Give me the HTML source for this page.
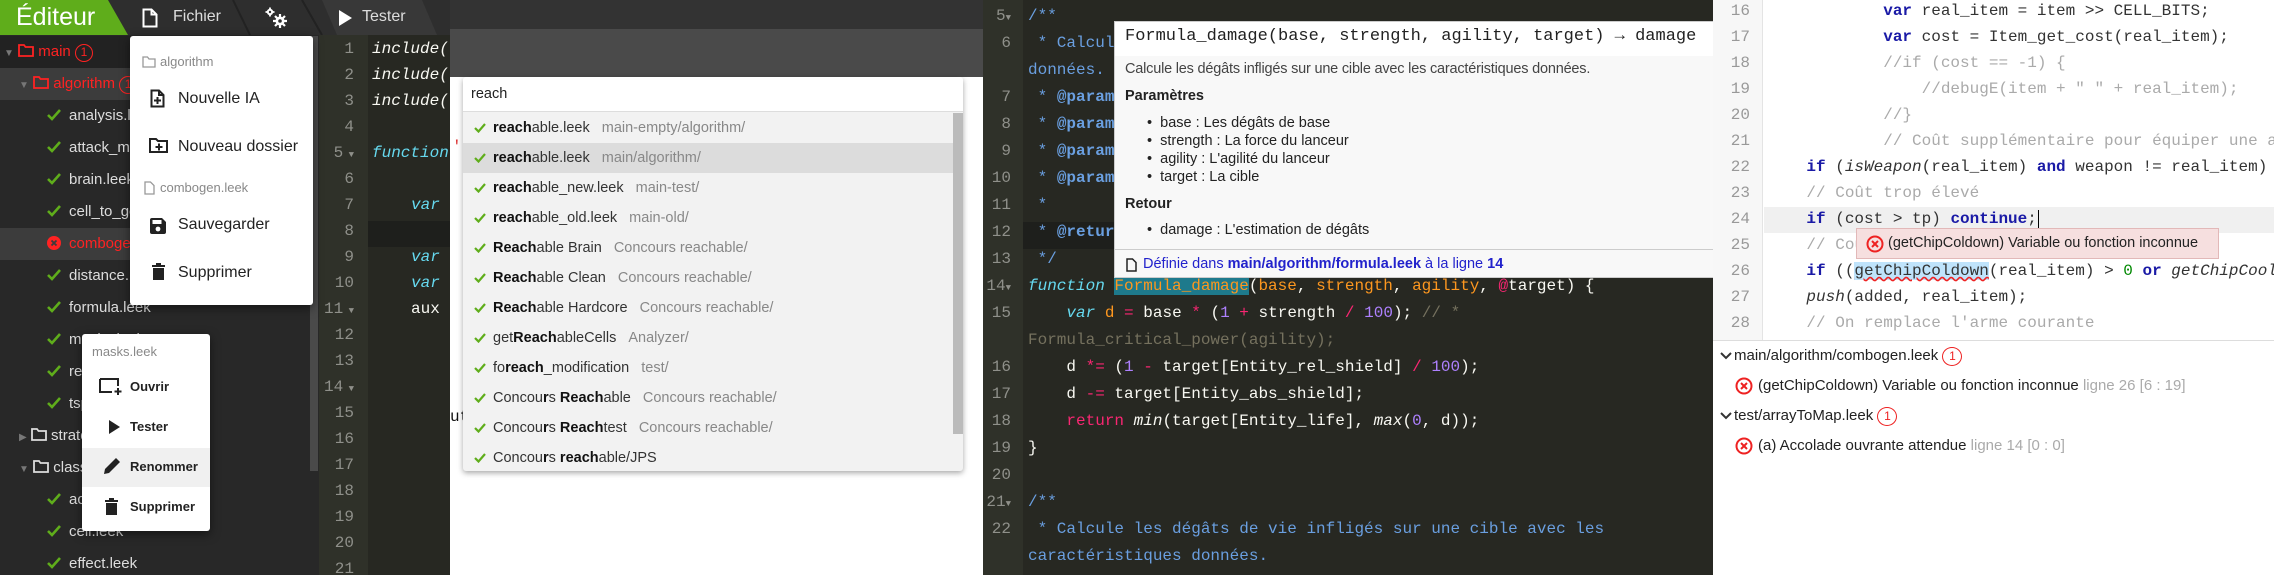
<!DOCTYPE html>
<html><head><meta charset="utf-8">
<style>
*{margin:0;padding:0;box-sizing:border-box}
body{width:2274px;height:575px;overflow:hidden;position:relative;background:#fff;font-family:"Liberation Sans",sans-serif}
.a{position:absolute;white-space:nowrap}
.mono{font-family:"Liberation Mono",monospace}
.mono div{white-space:pre}
.p1{left:0;top:0;width:450px;height:575px;background:#282828;overflow:hidden}
.tr{position:absolute;left:0;width:310px;height:32px;line-height:32px;font-size:15px;color:#ddd}
.chk{display:inline-block;width:14px;height:14px;vertical-align:-2px;margin-right:8px}
.ln1{position:absolute;width:36px;text-align:right;color:#8f908a;font-size:16px}
.c1{position:absolute;left:372px;font-size:16px}
.menu{position:absolute;background:#fff;border-radius:3px;box-shadow:0 3px 10px rgba(0,0,0,.5)}
.mi{position:absolute;left:0;right:0;font-size:16px;color:#222}
.ac{position:absolute;left:0;right:10px;height:30px;line-height:30px;font-size:14.5px;color:#333;padding-left:30px}
.ac b{color:#111}
.ac i{font-style:normal;color:#888;margin-left:12px}
.ac svg{position:absolute;left:11px;top:10px}
.ln3{position:absolute;left:983px;width:28px;text-align:right;color:#8f908a;font-size:16px}
.c3{position:absolute;left:1028px;font-size:16px;color:#f8f8f2}
.ln4{position:absolute;left:1714px;width:36px;text-align:right;color:#999;font-size:16px}
.c4{position:absolute;left:1768px;font-size:16px;color:#333}
.cm{color:#6a9fe0}
.kw{color:#66d9ef;font-style:italic}.or{color:#fd971f}.pk{color:#f92672}.nu{color:#ae81ff}.gr{color:#75715e}
.k4{color:#1a1aa6;font-weight:bold}.g4{color:#aaa}
</style></head><body>

<!-- PANEL 1 -->
<div class="a p1">
  <div class="a" style="left:0;top:0;width:450px;height:35px;background:#2e2e2e"></div>
  <div class="a" style="left:322px;top:0;width:128px;height:35px;background:#383838;clip-path:polygon(0 0,100px 0,115px 35px,15px 35px)"></div>
  <div class="a" style="left:0;top:0;width:130px;height:35px;background:#5fad1b;clip-path:polygon(0 0,108px 0,128px 35px,0 35px)"></div>
  <svg class="a" style="left:230px;top:0" width="100" height="35"><path d="M3 0 L20 35 M72 0 L92 35" stroke="#222" stroke-width="2"/></svg>
  <div class="a" style="left:16px;top:3px;font-size:25px;color:#fff">Éditeur</div>
  <svg class="a" style="left:142px;top:8px" width="16" height="20" viewBox="0 0 16 20"><path d="M1.5 1.5h8l5 5v12h-13z M9.5 1.5v5h5" fill="none" stroke="#fff" stroke-width="2"/></svg>
  <div class="a" style="left:173px;top:8px;font-size:16px;color:#ddd">Fichier</div>
  <svg class="a" style="left:264px;top:7px" width="24" height="22" viewBox="0 0 24 22"><circle cx="16" cy="14" r="4.5" fill="#fff"/><path d="M16 7v14M9 14h14M11 9l10 10M21 9l-10 10" stroke="#fff" stroke-width="2.2"/><circle cx="16" cy="14" r="1.8" fill="#2e2e2e"/><circle cx="6" cy="5" r="3.2" fill="#fff"/><path d="M6 0.5v9M1.5 5h9" stroke="#fff" stroke-width="1.8"/><circle cx="6" cy="5" r="1.2" fill="#2e2e2e"/></svg>
  <svg class="a" style="left:339px;top:10px" width="14" height="16"><path d="M0 0L13 8L0 16z" fill="#fff"/></svg>
  <div class="a" style="left:362px;top:8px;font-size:16px;color:#ddd">Tester</div>

  <div class="a" style="left:0;top:35px;width:318px;height:540px;background:#282828"></div>
  <div class="a" style="left:0;top:36px;width:310px;height:32px;background:#222"></div>
  <div class="a" style="left:0;top:68px;width:310px;height:32px;background:#3c3c3c"></div>
  <div class="a" style="left:0;top:228px;width:310px;height:32px;background:#3c3c3c"></div>
  <div class="a" style="left:310px;top:36px;width:8px;height:435px;background:#4a4a4a"></div>
  <div class="tr" style="top:36px;color:#f22;padding-left:4px"><span style="font-size:10px;color:#777">▼</span> <svg width="16" height="13" style="vertical-align:-1px"><path d="M1 1h5l1.5 2H15v9H1z" fill="none" stroke="#f22" stroke-width="1.8"/></svg> main <span style="display:inline-block;width:18px;height:18px;border:1.5px solid #f22;border-radius:50%;line-height:15px;text-align:center;font-size:12px">1</span></div>
  <div class="tr" style="top:68px;color:#f22;padding-left:19px"><span style="font-size:10px;color:#777">▼</span> <svg width="16" height="13" style="vertical-align:-1px"><path d="M1 1h5l1.5 2H15v9H1z" fill="none" stroke="#f22" stroke-width="1.8"/></svg> algorithm <span style="display:inline-block;width:18px;height:18px;border:1.5px solid #f22;border-radius:50%;line-height:15px;text-align:center;font-size:12px">1</span></div>
  <div class="tr" style="top:100px;padding-left:47px"><svg class="chk" viewBox="0 0 14 14"><path d="M1 7l4 4 8-9" fill="none" stroke="#5fad1b" stroke-width="2.6"/></svg>analysis.leek</div>
  <div class="tr" style="top:132px;padding-left:47px"><svg class="chk" viewBox="0 0 14 14"><path d="M1 7l4 4 8-9" fill="none" stroke="#5fad1b" stroke-width="2.6"/></svg>attack_manager.leek</div>
  <div class="tr" style="top:164px;padding-left:47px"><svg class="chk" viewBox="0 0 14 14"><path d="M1 7l4 4 8-9" fill="none" stroke="#5fad1b" stroke-width="2.6"/></svg>brain.leek</div>
  <div class="tr" style="top:196px;padding-left:47px"><svg class="chk" viewBox="0 0 14 14"><path d="M1 7l4 4 8-9" fill="none" stroke="#5fad1b" stroke-width="2.6"/></svg>cell_to_go.leek</div>
  <div class="tr" style="top:228px;padding-left:47px;color:#f22"><svg class="chk" viewBox="0 0 14 14"><circle cx="7" cy="7" r="7" fill="#f22"/><path d="M4.5 4.5l5 5M9.5 4.5l-5 5" stroke="#3c3c3c" stroke-width="1.8"/></svg>combogen.leek</div>
  <div class="tr" style="top:260px;padding-left:47px"><svg class="chk" viewBox="0 0 14 14"><path d="M1 7l4 4 8-9" fill="none" stroke="#5fad1b" stroke-width="2.6"/></svg>distance.leek</div>
  <div class="tr" style="top:292px;padding-left:47px"><svg class="chk" viewBox="0 0 14 14"><path d="M1 7l4 4 8-9" fill="none" stroke="#5fad1b" stroke-width="2.6"/></svg>formula.leek</div>
  <div class="tr" style="top:324px;padding-left:47px"><svg class="chk" viewBox="0 0 14 14"><path d="M1 7l4 4 8-9" fill="none" stroke="#5fad1b" stroke-width="2.6"/></svg>masks.leek</div>
  <div class="tr" style="top:356px;padding-left:47px"><svg class="chk" viewBox="0 0 14 14"><path d="M1 7l4 4 8-9" fill="none" stroke="#5fad1b" stroke-width="2.6"/></svg>reachable.leek</div>
  <div class="tr" style="top:388px;padding-left:47px"><svg class="chk" viewBox="0 0 14 14"><path d="M1 7l4 4 8-9" fill="none" stroke="#5fad1b" stroke-width="2.6"/></svg>tsp.leek</div>
  <div class="tr" style="top:420px;padding-left:19px"><span style="font-size:10px;color:#777">▶</span> <svg width="16" height="13" style="vertical-align:-1px"><path d="M1 1h5l1.5 2H15v9H1z" fill="none" stroke="#ddd" stroke-width="1.8"/></svg> strategy</div>
  <div class="tr" style="top:452px;padding-left:19px"><span style="font-size:10px;color:#777">▼</span> <svg width="16" height="13" style="vertical-align:-1px"><path d="M1 1h5l1.5 2H15v9H1z" fill="none" stroke="#ddd" stroke-width="1.8"/></svg> classes</div>
  <div class="tr" style="top:484px;padding-left:47px"><svg class="chk" viewBox="0 0 14 14"><path d="M1 7l4 4 8-9" fill="none" stroke="#5fad1b" stroke-width="2.6"/></svg>action.leek</div>
  <div class="tr" style="top:516px;padding-left:47px"><svg class="chk" viewBox="0 0 14 14"><path d="M1 7l4 4 8-9" fill="none" stroke="#5fad1b" stroke-width="2.6"/></svg>cell.leek</div>
  <div class="tr" style="top:548px;padding-left:47px"><svg class="chk" viewBox="0 0 14 14"><path d="M1 7l4 4 8-9" fill="none" stroke="#5fad1b" stroke-width="2.6"/></svg>effect.leek</div>

  <div class="a" style="left:319px;top:35px;width:49px;height:540px;background:#2f3129"></div>
  <div class="a" style="left:368px;top:35px;width:82px;height:540px;background:#272822"></div>
  <div class="a" style="left:368px;top:221px;width:82px;height:26px;background:#1e1f1c"></div>
</div>
<div class="a mono" style="left:0;top:0;width:450px;height:575px;overflow:hidden">
  <div class="ln1" style="left:318px;top:40px">1</div>
  <div class="ln1" style="left:318px;top:66px">2</div>
  <div class="ln1" style="left:318px;top:92px">3</div>
  <div class="ln1" style="left:318px;top:118px">4</div>
  <div class="ln1" style="left:318px;top:144px">5<span style="font-size:9px"> ▼</span></div>
  <div class="ln1" style="left:318px;top:170px">6</div>
  <div class="ln1" style="left:318px;top:196px">7</div>
  <div class="ln1" style="left:318px;top:222px">8</div>
  <div class="ln1" style="left:318px;top:248px">9</div>
  <div class="ln1" style="left:318px;top:274px">10</div>
  <div class="ln1" style="left:318px;top:300px">11<span style="font-size:9px"> ▼</span></div>
  <div class="ln1" style="left:318px;top:326px">12</div>
  <div class="ln1" style="left:318px;top:352px">13</div>
  <div class="ln1" style="left:318px;top:378px">14<span style="font-size:9px"> ▼</span></div>
  <div class="ln1" style="left:318px;top:404px">15</div>
  <div class="ln1" style="left:318px;top:430px">16</div>
  <div class="ln1" style="left:318px;top:456px">17</div>
  <div class="ln1" style="left:318px;top:482px">18</div>
  <div class="ln1" style="left:318px;top:508px">19</div>
  <div class="ln1" style="left:318px;top:534px">20</div>
  <div class="ln1" style="left:318px;top:560px">21</div>
  <div class="c1" style="top:40px;color:#f8f8f2;font-style:italic">include(</div>
  <div class="c1" style="top:66px;color:#f8f8f2;font-style:italic">include(</div>
  <div class="c1" style="top:92px;color:#f8f8f2;font-style:italic">include(</div>
  <div class="c1 kw" style="top:144px">function</div>
  <div class="c1 kw" style="top:196px;left:411px">var</div>
  <div class="c1 kw" style="top:248px;left:411px">var</div>
  <div class="c1 kw" style="top:274px;left:411px">var</div>
  <div class="c1" style="top:300px;left:411px;color:#f8f8f2">aux</div>
</div>

<div class="menu" style="left:130px;top:36px;width:183px;height:269px">
  <svg class="a" style="left:12px;top:20px" width="14" height="12"><path d="M1 1h4.5l1.5 2H13v8H1z" fill="none" stroke="#999" stroke-width="1.3"/></svg>
  <div class="mi" style="left:30px;top:18px;font-size:13px;color:#888">algorithm</div>
  <svg class="a" style="left:20px;top:53px" width="15" height="19"><path d="M1.5 1.5h7.5l4.5 4.5v11.5h-12z M9 1.5v4.5h4.5" fill="none" stroke="#222" stroke-width="2"/><path d="M7.5 8v7M4 11.5h7" stroke="#222" stroke-width="2"/></svg>
  <div class="mi" style="left:48px;top:54px">Nouvelle IA</div>
  <svg class="a" style="left:19px;top:102px" width="19" height="15"><path d="M1 1h6l2 2h9v11H1z" fill="none" stroke="#222" stroke-width="2"/><path d="M10 5.5v7M6.5 9h7" stroke="#222" stroke-width="2"/></svg>
  <div class="mi" style="left:48px;top:102px">Nouveau dossier</div>
  <svg class="a" style="left:14px;top:145px" width="11" height="14"><path d="M1 1h5.5l3.5 3.5v8.5H1z" fill="none" stroke="#999" stroke-width="1.3"/></svg>
  <div class="mi" style="left:30px;top:144px;font-size:13px;color:#888">combogen.leek</div>
  <svg class="a" style="left:20px;top:182px" width="16" height="16"><path d="M0 2a2 2 0 0 1 2-2h10l4 4v10a2 2 0 0 1-2 2H2a2 2 0 0 1-2-2z" fill="#222"/><rect x="2.5" y="2" width="9" height="4" fill="#fff"/><circle cx="8" cy="11" r="2.4" fill="#fff"/></svg>
  <div class="mi" style="left:48px;top:180px">Sauvegarder</div>
  <svg class="a" style="left:22px;top:227px" width="13" height="17"><path d="M0 2h13v2H0z M4 0h5v2H4z M1 5h11v12H1z" fill="#222"/></svg>
  <div class="mi" style="left:48px;top:228px">Supprimer</div>
</div>

<div class="menu" style="left:82px;top:334px;width:128px;height:197px">
  <div class="mi" style="left:10px;top:10px;font-size:13px;color:#888">masks.leek</div>
  <svg class="a" style="left:17px;top:44px" width="24" height="18"><path d="M1 1h18v7 M1 1v13h12" fill="none" stroke="#222" stroke-width="2"/><path d="M19 10v7M15.5 13.5h7" stroke="#222" stroke-width="2"/></svg>
  <div class="mi" style="left:48px;top:45px;font-size:13px;font-weight:bold">Ouvrir</div>
  <svg class="a" style="left:27px;top:86px" width="11" height="14"><path d="M0 0L11 7L0 14z" fill="#222"/></svg>
  <div class="mi" style="left:48px;top:85px;font-size:13px;font-weight:bold">Tester</div>
  <div class="a" style="left:0;top:114px;width:128px;height:39px;background:#f0f0f0"></div>
  <svg class="a" style="left:20px;top:122px" width="20" height="20"><path d="M2 18l1-5L14 2l4 4L7 17z" fill="#222"/></svg>
  <div class="mi" style="left:48px;top:125px;font-size:13px;font-weight:bold">Renommer</div>
  <svg class="a" style="left:23px;top:164px" width="13" height="17"><path d="M0 2h13v2H0z M4 0h5v2H4z M1 5h11v12H1z" fill="#222"/></svg>
  <div class="mi" style="left:48px;top:165px;font-size:13px;font-weight:bold">Supprimer</div>
</div>

<!-- PANEL 2 -->
<div class="a" style="left:450px;top:0;width:533px;height:29px;background:#333"></div>
<div class="a" style="left:450px;top:29px;width:533px;height:48px;background:#4a4a4a"></div>
<div class="a mono" style="left:452px;top:138px;font-size:16px;color:#111"><span style="color:#d33">'</span>)</div>
<div class="a mono" style="left:450px;top:408px;font-size:16px;color:#111">ut</div>
<div class="a" style="left:463px;top:77px;width:500px;height:394px;background:#f2f2f2;box-shadow:0 2px 6px rgba(0,0,0,.35);border-radius:3px;overflow:hidden">
  <div class="a" style="left:0;top:0;width:500px;height:35px;background:#fff;border-bottom:1px solid #ddd"></div>
  <div class="a" style="left:8px;top:9px;font-size:14.5px;color:#222">reach</div>
  <div class="a" style="left:490px;top:36px;width:10px;height:321px;background:#bbb"></div>
  <div class="a" style="left:0;top:66px;width:490px;height:30px;background:#dcdcdc"></div>
  <div style="position:absolute;left:0;top:36px;width:500px">
    <div class="ac" style="top:0"><svg width="12" height="10"><path d="M1 5l3.5 3.5L11 1" fill="none" stroke="#5fad1b" stroke-width="2.2"/></svg><b>reach</b>able.leek<i>main-empty/algorithm/</i></div>
    <div class="ac" style="top:30px"><svg width="12" height="10"><path d="M1 5l3.5 3.5L11 1" fill="none" stroke="#5fad1b" stroke-width="2.2"/></svg><b>reach</b>able.leek<i>main/algorithm/</i></div>
    <div class="ac" style="top:60px"><svg width="12" height="10"><path d="M1 5l3.5 3.5L11 1" fill="none" stroke="#5fad1b" stroke-width="2.2"/></svg><b>reach</b>able_new.leek<i>main-test/</i></div>
    <div class="ac" style="top:90px"><svg width="12" height="10"><path d="M1 5l3.5 3.5L11 1" fill="none" stroke="#5fad1b" stroke-width="2.2"/></svg><b>reach</b>able_old.leek<i>main-old/</i></div>
    <div class="ac" style="top:120px"><svg width="12" height="10"><path d="M1 5l3.5 3.5L11 1" fill="none" stroke="#5fad1b" stroke-width="2.2"/></svg><b>Reach</b>able Brain<i>Concours reachable/</i></div>
    <div class="ac" style="top:150px"><svg width="12" height="10"><path d="M1 5l3.5 3.5L11 1" fill="none" stroke="#5fad1b" stroke-width="2.2"/></svg><b>Reach</b>able Clean<i>Concours reachable/</i></div>
    <div class="ac" style="top:180px"><svg width="12" height="10"><path d="M1 5l3.5 3.5L11 1" fill="none" stroke="#5fad1b" stroke-width="2.2"/></svg><b>Reach</b>able Hardcore<i>Concours reachable/</i></div>
    <div class="ac" style="top:210px"><svg width="12" height="10"><path d="M1 5l3.5 3.5L11 1" fill="none" stroke="#5fad1b" stroke-width="2.2"/></svg>get<b>Reach</b>ableCells<i>Analyzer/</i></div>
    <div class="ac" style="top:240px"><svg width="12" height="10"><path d="M1 5l3.5 3.5L11 1" fill="none" stroke="#5fad1b" stroke-width="2.2"/></svg>fo<b>reach</b>_modification<i>test/</i></div>
    <div class="ac" style="top:270px"><svg width="12" height="10"><path d="M1 5l3.5 3.5L11 1" fill="none" stroke="#5fad1b" stroke-width="2.2"/></svg>Concou<b>r</b>s <b>Reach</b>able<i>Concours reachable/</i></div>
    <div class="ac" style="top:300px"><svg width="12" height="10"><path d="M1 5l3.5 3.5L11 1" fill="none" stroke="#5fad1b" stroke-width="2.2"/></svg>Concou<b>r</b>s <b>Reach</b>test<i>Concours reachable/</i></div>
    <div class="ac" style="top:330px"><svg width="12" height="10"><path d="M1 5l3.5 3.5L11 1" fill="none" stroke="#5fad1b" stroke-width="2.2"/></svg>Concou<b>r</b>s <b>reach</b>able/JPS</div>
  </div>
</div>

<!-- PANEL 3 -->
<div class="a" style="left:983px;top:0;width:730px;height:575px;background:#272822"></div>
<div class="a" style="left:983px;top:0;width:40px;height:575px;background:#2f3129"></div>
<div class="a" style="left:1023px;top:222px;width:690px;height:27px;background:#1e1f1c"></div>
<div class="a mono" style="left:0;top:0;width:1713px;height:575px;overflow:hidden">
  <div class="ln3" style="top:7px">5<span style="font-size:9px">▼</span></div>
  <div class="ln3" style="top:34px">6</div>
  <div class="ln3" style="top:88px">7</div>
  <div class="ln3" style="top:115px">8</div>
  <div class="ln3" style="top:142px">9</div>
  <div class="ln3" style="top:169px">10</div>
  <div class="ln3" style="top:196px">11</div>
  <div class="ln3" style="top:223px">12</div>
  <div class="ln3" style="top:250px">13</div>
  <div class="ln3" style="top:277px">14<span style="font-size:9px">▼</span></div>
  <div class="ln3" style="top:304px">15</div>
  <div class="ln3" style="top:358px">16</div>
  <div class="ln3" style="top:385px">17</div>
  <div class="ln3" style="top:412px">18</div>
  <div class="ln3" style="top:439px">19</div>
  <div class="ln3" style="top:466px">20</div>
  <div class="ln3" style="top:493px">21<span style="font-size:9px">▼</span></div>
  <div class="ln3" style="top:520px">22</div>
  <div class="c3 cm" style="top:7px">/**</div>
  <div class="c3 cm" style="top:34px"> * Calcule les dégâts infligés sur une cible avec les caractéristiques</div>
  <div class="c3 cm" style="top:61px">données.</div>
  <div class="c3 cm" style="top:88px"> * <b>@param</b></div>
  <div class="c3 cm" style="top:115px"> * <b>@param</b></div>
  <div class="c3 cm" style="top:142px"> * <b>@param</b></div>
  <div class="c3 cm" style="top:169px"> * <b>@param</b></div>
  <div class="c3 cm" style="top:196px"> *</div>
  <div class="c3 cm" style="top:223px"> * <b>@return</b></div>
  <div class="c3 cm" style="top:250px"> */</div>
  <div class="c3" style="top:277px"><span class="kw">function</span> <span class="or" style="background:#1e7a8c">Formula_damage</span>(<span class="or">base</span>, <span class="or">strength</span>, <span class="or">agility</span>, <span class="pk">@</span>target) {</div>
  <div class="c3" style="top:304px">    <span class="kw">var</span> <span class="or">d</span> <span class="pk">=</span> base <span class="pk">*</span> (<span class="nu">1</span> <span class="pk">+</span> strength <span class="pk">/</span> <span class="nu">100</span>); <span class="gr">// *</span></div>
  <div class="c3 gr" style="top:331px">Formula_critical_power(agility);</div>
  <div class="c3" style="top:358px">    d <span class="pk">*=</span> (<span class="nu">1</span> <span class="pk">-</span> target[Entity_rel_shield] <span class="pk">/</span> <span class="nu">100</span>);</div>
  <div class="c3" style="top:385px">    d <span class="pk">-=</span> target[Entity_abs_shield];</div>
  <div class="c3" style="top:412px">    <span class="pk">return</span> <i>min</i>(target[Entity_life], <i>max</i>(<span class="nu">0</span>, d));</div>
  <div class="c3" style="top:439px">}</div>
  <div class="c3 cm" style="top:493px">/**</div>
  <div class="c3 cm" style="top:520px"> * Calcule les dégâts de vie infligés sur une cible avec les</div>
  <div class="c3 cm" style="top:547px">caractéristiques données.</div>
</div>
<div class="a" style="left:1114px;top:21px;width:599px;height:257px;background:#f8f8f8;border:1px solid #ccc;border-right:none">
  <div class="a" style="left:0;top:0;width:599px;height:34px;background:#fff"></div>
  <div class="a mono" style="left:10px;top:5px;font-size:17px;color:#222">Formula_damage(base, strength, agility, target) → damage</div>
  <div class="a" style="left:10px;top:39px;font-size:14.5px;color:#444;letter-spacing:-0.2px">Calcule les dégâts infligés sur une cible avec les caractéristiques données.</div>
  <div class="a" style="left:10px;top:66px;font-size:14.5px;color:#222;font-weight:bold">Paramètres</div>
  <div class="a" style="left:32px;top:92px;font-size:14.5px;color:#222;line-height:18px">• &nbsp;base : Les dégâts de base<br>• &nbsp;strength : La force du lanceur<br>• &nbsp;agility : L'agilité du lanceur<br>• &nbsp;target : La cible</div>
  <div class="a" style="left:10px;top:174px;font-size:14.5px;color:#222;font-weight:bold">Retour</div>
  <div class="a" style="left:32px;top:200px;font-size:14.5px;color:#222">• &nbsp;damage : L'estimation de dégâts</div>
  <div class="a" style="left:0;top:227px;width:599px;height:1px;background:#ccc"></div>
  <svg class="a" style="left:11px;top:236px" width="11" height="14"><path d="M1 1h5.5l3.5 3.5v8.5H1z" fill="none" stroke="#222" stroke-width="1.5"/></svg>
  <div class="a" style="left:28px;top:234px;font-size:14.5px;color:#2222cc">Définie dans <b>main/algorithm/formula.leek</b> à la ligne <b>14</b></div>
</div>

<!-- PANEL 4 -->
<div class="a" style="left:1713px;top:0;width:561px;height:341px;background:#fff"></div>
<div class="a" style="left:1713px;top:0;width:50px;height:341px;background:#f7f7f7;border-right:1px solid #e4e4e4"></div>
<div class="a" style="left:1764px;top:207px;width:510px;height:26px;background:#f0f0f0"></div>
<div class="a" style="left:1713px;top:340px;width:561px;height:1px;background:#ddd"></div>
<div class="a mono" style="left:0;top:0;width:2274px;height:341px;overflow:hidden">
  <div class="ln4" style="top:2px">16</div>
  <div class="ln4" style="top:28px">17</div>
  <div class="ln4" style="top:54px">18</div>
  <div class="ln4" style="top:80px">19</div>
  <div class="ln4" style="top:106px">20</div>
  <div class="ln4" style="top:132px">21</div>
  <div class="ln4" style="top:158px">22</div>
  <div class="ln4" style="top:184px">23</div>
  <div class="ln4" style="top:210px">24</div>
  <div class="ln4" style="top:236px">25</div>
  <div class="ln4" style="top:262px">26</div>
  <div class="ln4" style="top:288px">27</div>
  <div class="ln4" style="top:314px">28</div>
  <div class="c4" style="top:2px">            <span class="k4">var</span> real_item = item &gt;&gt; CELL_BITS;</div>
  <div class="c4" style="top:28px">            <span class="k4">var</span> cost = Item_get_cost(real_item);</div>
  <div class="c4 g4" style="top:54px">            //if (cost == -1) {</div>
  <div class="c4 g4" style="top:80px">                //debugE(item + " " + real_item);</div>
  <div class="c4 g4" style="top:106px">            //}</div>
  <div class="c4 g4" style="top:132px">            // Coût supplémentaire pour équiper une arme</div>
  <div class="c4" style="top:158px">    <span class="k4">if</span> (<i>isWeapon</i>(real_item) <span class="k4">and</span> weapon != real_item) {</div>
  <div class="c4 g4" style="top:184px">    // Coût trop élevé</div>
  <div class="c4" style="top:210px">    <span class="k4">if</span> (cost &gt; tp) <span class="k4">continue</span>;<span style="border-left:1.5px solid #000;margin-left:1px"></span></div>
  <div class="c4 g4" style="top:236px">    // Coût</div>
  <div class="c4" style="top:262px">    <span class="k4">if</span> ((<span style="background:#bfe3fb;text-decoration:underline wavy #e22">getChipColdown</span>(real_item) &gt; <span style="color:#080">0</span> <span class="k4">or</span> <i>getChipCooldown</i>(real_item)</div>
  <div class="c4" style="top:288px">    <i>push</i>(added, real_item);</div>
  <div class="c4 g4" style="top:314px">    // On remplace l'arme courante</div>
</div>
<div class="a" style="left:1856px;top:228px;width:363px;height:31px;background:#f6dfdf;border:1px solid #e2b8b8">
  <svg class="a" style="left:9px;top:6px" width="18" height="18"><circle cx="9" cy="9" r="7.5" fill="none" stroke="#e22" stroke-width="2"/><path d="M6 6l6 6M12 6l-6 6" stroke="#e22" stroke-width="2"/></svg>
  <div class="a" style="left:31px;top:6px;font-size:14.5px;color:#222">(getChipColdown) Variable ou fonction inconnue</div>
</div>
<svg class="a" style="left:1720px;top:352px" width="12" height="8"><path d="M1 1l5 5 5-5" fill="none" stroke="#333" stroke-width="2"/></svg>
<div class="a" style="left:1734px;top:347px;font-size:15px;color:#222">main/algorithm/combogen.leek <span style="display:inline-block;width:20px;height:19px;border:1.5px solid #e22;border-radius:50%;text-align:center;line-height:16px;font-size:12px;color:#e22">1</span></div>
<svg class="a" style="left:1735px;top:377px" width="18" height="18"><circle cx="9" cy="9" r="7.5" fill="none" stroke="#e22" stroke-width="2"/><path d="M6 6l6 6M12 6l-6 6" stroke="#e22" stroke-width="2"/></svg>
<div class="a" style="left:1758px;top:377px;font-size:15px;color:#222">(getChipColdown) Variable ou fonction inconnue <span style="color:#aaa">ligne 26 [6 : 19]</span></div>
<svg class="a" style="left:1720px;top:412px" width="12" height="8"><path d="M1 1l5 5 5-5" fill="none" stroke="#333" stroke-width="2"/></svg>
<div class="a" style="left:1734px;top:407px;font-size:15px;color:#222">test/arrayToMap.leek <span style="display:inline-block;width:20px;height:19px;border:1.5px solid #e22;border-radius:50%;text-align:center;line-height:16px;font-size:12px;color:#e22">1</span></div>
<svg class="a" style="left:1735px;top:437px" width="18" height="18"><circle cx="9" cy="9" r="7.5" fill="none" stroke="#e22" stroke-width="2"/><path d="M6 6l6 6M12 6l-6 6" stroke="#e22" stroke-width="2"/></svg>
<div class="a" style="left:1758px;top:437px;font-size:15px;color:#222">(a) Accolade ouvrante attendue <span style="color:#aaa">ligne 14 [0 : 0]</span></div>
</body></html>
